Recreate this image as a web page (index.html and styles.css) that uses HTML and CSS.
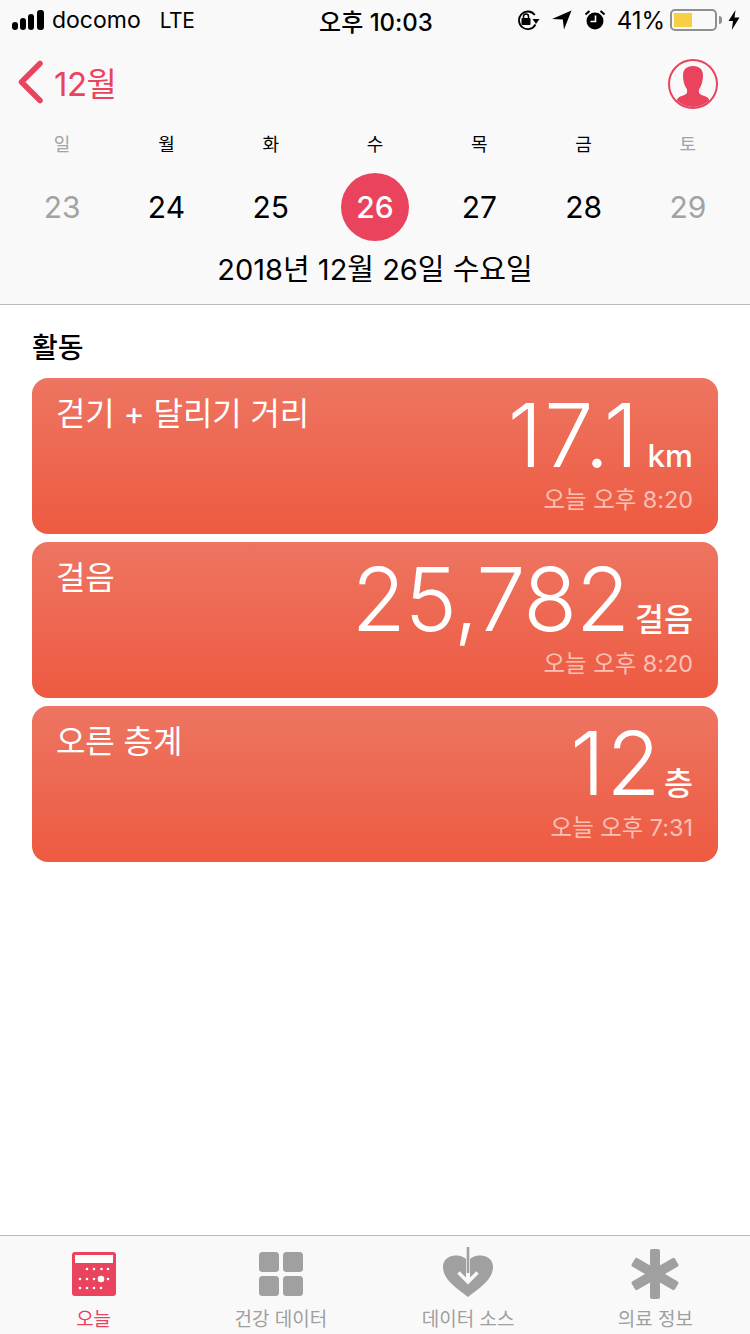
FILE: index.html
```html
<!DOCTYPE html>
<html lang="ko">
<head>
    <meta charset="UTF-8">
    <meta name="viewport" content="width=device-width, initial-scale=1.0">
    <title>건강</title>
    <link rel="stylesheet" href="styles.css">
</head>
<body>

    <!-- Header Section -->
    <div class="header">
        <div class="status-bar">
            <div class="status-left">
                <svg class="signal" width="34" height="20" viewBox="0 0 34 20">
                    <rect x="0" y="12" width="6" height="8" rx="3" fill="#000"/>
                    <rect x="8" y="8" width="6" height="12" rx="3" fill="#000"/>
                    <rect x="16" y="4" width="6" height="16" rx="3" fill="#000"/>
                    <rect x="25" y="0" width="7" height="20" rx="3" fill="#000"/>
                </svg>
                <span class="carrier">docomo</span>
                <span class="network">LTE</span>
            </div>
            <div class="status-time">오후 10:03</div>
            <div class="status-right">
                <svg width="24" height="20" viewBox="0 0 24 20">
                    <path d="M19.500 14.500A8.800 8.800 0 1 1 18.800 5" fill="none" stroke="#000" stroke-width="1.800"/>
                    <path d="M16.500 9h7L20 14z" fill="#000"/>
                    <rect x="5.500" y="8" width="9" height="7" rx="1" fill="#000"/>
                    <path d="M7.500 8V6.500a2.500 2.500 0 0 1 5 0V8" fill="none" stroke="#000" stroke-width="1.500"/>
                </svg>
                <svg class="arrow-icon" width="20" height="20" viewBox="0 0 20 20">
                    <path d="M0 9L19.500 0.500L12 19.500L10.800 9.500z" fill="#000"/>
                </svg>
                <svg class="alarm-icon" width="20" height="20" viewBox="0 0 20 20">
                    <circle cx="10" cy="11" r="8.500" fill="#000"/>
                    <path d="M10.500 5.500V11.500H5.500" fill="none" stroke="#fff" stroke-width="1.600"/>
                    <path d="M0.500 4.500L4.500 1M19.500 4.500L15.500 1" stroke="#000" stroke-width="2"/>
                </svg>
                <span class="battery-pct">41%</span>
                <div class="battery">
                    <div class="battery-fill"></div>
                </div>
                <div class="battery-tip"></div>
                <svg class="bolt" width="12" height="20" viewBox="0 0 12 20">
                    <path d="M7.500 0L0.500 11H5L3.800 20L11.500 7.500H6.500z" fill="#000"/>
                </svg>
            </div>
        </div>

        <div class="nav-bar">
            <a class="back-link">
                <svg width="26" height="44" viewBox="0 0 26 44">
                    <path d="M22 3.500L3.500 22L22 40.500" fill="none" stroke="#e9435e" stroke-width="5.500" stroke-linecap="round" stroke-linejoin="round"/>
                </svg>
                <span>12월</span>
            </a>
            <svg class="profile" width="50" height="50" viewBox="0 0 50 50">
                <defs>
                    <clipPath id="profile-clip"><circle cx="25" cy="25" r="23"/></clipPath>
                </defs>
                <circle cx="25" cy="25" r="24" fill="none" stroke="#e9435e" stroke-width="2"/>
                <path clip-path="url(#profile-clip)" d="M25 7c-6.500 0-10 3.500-10 9.500 0 5 1.300 10 3.500 13 1 1.500 0.800 4.500-0.500 5.500-1.500 1.300-5.500 2-7.500 3.500-1 1-2 2.500-2 4.500v7h33v-7c0-2-1-3.500-2-4.500-2-1.500-6-2.200-7.500-3.500-1.300-1-1.500-4-0.500-5.500 2.200-3 3.500-8 3.500-13 0-6-3.500-9.500-10-9.500z" fill="#e9435e"/>
            </svg>
        </div>

        <div class="week-row">
            <div class="weekday muted">일</div>
            <div class="weekday">월</div>
            <div class="weekday">화</div>
            <div class="weekday">수</div>
            <div class="weekday">목</div>
            <div class="weekday">금</div>
            <div class="weekday muted">토</div>
        </div>
        <div class="week-row">
            <div class="day muted">23</div>
            <div class="day">24</div>
            <div class="day">25</div>
            <div class="day"><span class="day-today">26</span></div>
            <div class="day">27</div>
            <div class="day">28</div>
            <div class="day muted">29</div>
        </div>
        <div class="full-date">2018년 12월 26일 수요일</div>
    </div>

    <!-- Activity Section -->
    <div class="container">
        <h2>활동</h2>

        <div class="card">
            <div class="card-title">걷기 + 달리기 거리</div>
            <div class="card-data">
                <div class="card-value"><span class="number-distance">17.1</span><span class="card-unit">km</span></div>
                <div class="card-time">오늘 오후 8:20</div>
            </div>
        </div>

        <div class="card">
            <div class="card-title">걸음</div>
            <div class="card-data">
                <div class="card-value"><span class="number-steps">25,782</span><span class="card-unit">걸음</span></div>
                <div class="card-time">오늘 오후 8:20</div>
            </div>
        </div>

        <div class="card">
            <div class="card-title">오른 층계</div>
            <div class="card-data">
                <div class="card-value"><span class="number-floors">12</span><span class="card-unit">층</span></div>
                <div class="card-time">오늘 오후 7:31</div>
            </div>
        </div>
    </div>

    <!-- Tab Bar -->
    <div class="tab-bar">
        <div class="tab active">
            <div class="tab-icon">
                <svg width="44" height="44" viewBox="0 0 44 44">
                    <rect width="44" height="44" rx="3" fill="#e9435e"/>
                    <rect x="3" y="3" width="38" height="8" fill="#fff"/>
                    <g fill="#fff">
                        <circle cx="15" cy="17" r="1.300"/><circle cx="22" cy="17" r="1.300"/><circle cx="29.500" cy="17" r="1.300"/><circle cx="36" cy="17" r="1.300"/>
                        <circle cx="8" cy="27" r="1.300"/><circle cx="15" cy="27" r="1.300"/><circle cx="22" cy="27" r="1.300"/><circle cx="29" cy="27" r="3.300"/><circle cx="36" cy="27" r="1.300"/>
                        <circle cx="8" cy="36" r="1.300"/><circle cx="15" cy="36" r="1.300"/><circle cx="22" cy="36" r="1.300"/><circle cx="29" cy="36" r="1.300"/>
                    </g>
                </svg>
            </div>
            <span>오늘</span>
        </div>
        <div class="tab">
            <div class="tab-icon">
                <svg width="44" height="44" viewBox="0 0 44 44">
                    <rect width="20" height="20" rx="3.500" fill="#a0a0a0"/>
                    <rect x="24" width="20" height="20" rx="3.500" fill="#a0a0a0"/>
                    <rect y="24" width="20" height="20" rx="3.500" fill="#a0a0a0"/>
                    <rect x="24" y="24" width="20" height="20" rx="3.500" fill="#a0a0a0"/>
                </svg>
            </div>
            <span>건강 데이터</span>
        </div>
        <div class="tab">
            <div class="tab-icon">
                <svg class="heart-icon" width="50" height="50" viewBox="0 0 50 50">
                    <path d="M25 50C18 44 0 34 0 20C0 12.500 6 8.500 12.500 8.500C18 8.500 22.500 10.500 25 14C27.500 10.500 32 8.500 37.500 8.500C44 8.500 50 12.500 50 20C50 34 32 44 25 50z" fill="#a0a0a0"/>
                    <path d="M25 9V34" fill="none" stroke="#f9f9f9" stroke-width="4"/>
                    <path d="M25 0V26" fill="none" stroke="#a0a0a0" stroke-width="2.600"/>
                    <path d="M15.500 25.500L25 35L34.500 25.500" fill="none" stroke="#f9f9f9" stroke-width="3.500"/>
                </svg>
            </div>
            <span>데이터 소스</span>
        </div>
        <div class="tab">
            <div class="tab-icon">
                <svg width="50" height="50" viewBox="0 0 50 50">
                    <rect x="20" y="0" width="10" height="50" rx="2" fill="#a0a0a0"/>
                    <rect x="20" y="0" width="10" height="50" rx="2" fill="#a0a0a0" transform="rotate(60 25 25)"/>
                    <rect x="20" y="0" width="10" height="50" rx="2" fill="#a0a0a0" transform="rotate(120 25 25)"/>
                </svg>
            </div>
            <span>의료 정보</span>
        </div>
    </div>

</body>
</html>
```

FILE: styles.css
```css
body {
    font-family: Inter, "Noto Sans CJK KR", sans-serif;
    margin: 0;
    padding: 0;
    background-color: #fff;
    color: #000;
    display: flex;
    flex-direction: column;
    height: 1334px;
    overflow: hidden;
}
.header {
    background-color: #f9f9f9;
    border-bottom: 1px solid #b9b9b9;
    height: 304px;
}
.status-bar {
    height: 40px;
    padding: 0 10px 0 12px;
    display: grid;
    grid-template-columns: 1fr auto 1fr;
    align-items: center;
    font-size: 23px;
}
.status-left {
    display: flex;
    align-items: center;
}
.signal {
    margin-right: 6px;
}
.carrier {
    font-size: 23px;
    margin-right: 19px;
}
.network {
    font-size: 21px;
    letter-spacing: -0.5px;
}
.status-time {
    font-size: 24px;
    font-weight: 500;
}
.status-right {
    display: flex;
    align-items: center;
    justify-content: flex-end;
}
.arrow-icon {
    margin-left: 12px;
}
.alarm-icon {
    margin-left: 13px;
}
.battery-pct {
    margin-left: 12px;
    font-size: 24px;
}
.battery {
    margin-left: 5px;
    width: 39px;
    height: 14px;
    border: 2px solid #8f8f8f;
    border-radius: 5px;
    padding: 2px;
    flex-shrink: 0;
}
.battery-fill {
    width: 18px;
    height: 14px;
    background-color: #f7cf46;
}
.battery-tip {
    width: 3px;
    height: 8px;
    margin-left: 2px;
    background-color: #8f8f8f;
    border-radius: 0 3px 3px 0;
}
.bolt {
    margin-left: 6px;
}
.nav-bar {
    height: 84px;
    padding: 0 32px 0 18px;
    display: flex;
    align-items: center;
    justify-content: space-between;
}
.back-link {
    display: flex;
    align-items: center;
    gap: 10px;
    color: #e9435e;
    font-size: 33px;
    letter-spacing: -0.5px;
}
.profile {
    margin-top: 4px;
}
.week-row {
    display: grid;
    grid-template-columns: repeat(7, 1fr);
    padding: 0 10px;
    text-align: center;
}
.weekday {
    font-size: 18px;
    height: 42px;
    line-height: 42px;
}
.day {
    font-size: 30px;
    height: 76px;
    display: flex;
    align-items: center;
    justify-content: center;
    margin-top: 3px;
}
.muted {
    color: #a3a3a3;
}
.day-today {
    width: 68px;
    height: 68px;
    border-radius: 50%;
    background-color: #e9435e;
    color: #fff;
    font-weight: 500;
    display: flex;
    align-items: center;
    justify-content: center;
}
.full-date {
    text-align: center;
    font-size: 29px;
    line-height: 40px;
    margin-top: 5px;
}
.container {
    flex: 1;
    padding: 23px 32px 0;
}
.container h2 {
    margin: 0 0 10px 0;
    font-size: 28px;
    line-height: 40px;
    font-weight: 500;
}
.card {
    background: linear-gradient(#ed7561, #ee5a41);
    border-radius: 16px;
    height: 156px;
    margin-bottom: 8px;
    padding: 13px 25px 0 24px;
    box-sizing: border-box;
    color: #fff;
    display: flex;
    justify-content: space-between;
}
.card-title {
    font-size: 32px;
    line-height: 46px;
    letter-spacing: -0.1px;
}
.card-data {
    text-align: right;
}
.card-value {
    font-size: 88px;
    font-weight: 300;
    line-height: 90px;
    margin-top: -1px;
}
.number-distance {
    letter-spacing: 2px;
    margin-right: -2px;
}
.number-steps {
    letter-spacing: -1px;
    margin-right: -3px;
}
.number-floors {
    letter-spacing: 1.5px;
    margin-right: -7px;
}
.card-unit {
    font-size: 31.5px;
    font-weight: 500;
    margin-left: 9px;
}
.card-time {
    font-size: 23.4px;
    line-height: 30px;
    margin-top: -16px;
    color: #f9c1b5;
}
.tab-bar {
    height: 98px;
    background-color: #f9f9f9;
    border-top: 1px solid #b9b9b9;
    padding-right: 1px;
    display: grid;
    grid-template-columns: repeat(4, 1fr);
}
.tab {
    display: flex;
    flex-direction: column;
    align-items: center;
    color: #9f9f9f;
    font-size: 19px;
    padding-top: 12px;
}
.tab-icon {
    height: 52px;
    display: flex;
    align-items: center;
}
.heart-icon {
    margin-bottom: 4px;
}
.tab span {
    margin-top: 5px;
    line-height: 30px;
}
.tab.active {
    color: #e9435e;
}
```
